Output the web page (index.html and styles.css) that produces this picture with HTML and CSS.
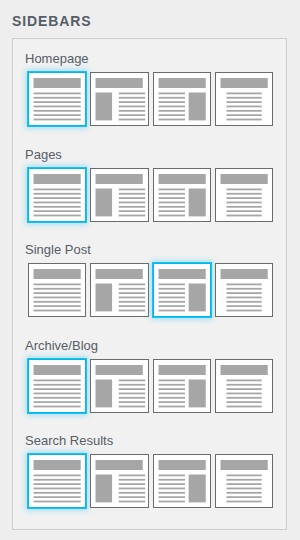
FILE: index.html
```html
<!DOCTYPE html>
<html>
<head>
<meta charset="utf-8">
<link rel="stylesheet" href="styles.css">
</head>
<body>
<svg width="0" height="0" class="defs" aria-hidden="true">
  <defs>
    <g id="lines-full">
      <rect x="4.5" y="19.5" width="47" height="1.8"/>
      <rect x="4.5" y="23.85" width="47" height="1.8"/>
      <rect x="4.5" y="28.2" width="47" height="1.8"/>
      <rect x="4.5" y="32.55" width="47" height="1.8"/>
      <rect x="4.5" y="36.9" width="47" height="1.8"/>
      <rect x="4.5" y="41.25" width="47" height="1.8"/>
      <rect x="4.5" y="45.6" width="47" height="1.8"/>
    </g>
    <g id="lay-full">
      <rect x="4.5" y="5" width="47" height="10"/>
      <use href="#lines-full"/>
    </g>
    <g id="lay-left">
      <rect x="4.5" y="5" width="47" height="10"/>
      <rect x="4.5" y="19.5" width="16.5" height="27.9"/>
      <use href="#lines-full" transform="translate(25.1 0) scale(0.56 1)"/>
    </g>
    <g id="lay-right">
      <rect x="4.5" y="5" width="47" height="10"/>
      <rect x="34.5" y="19.5" width="17" height="27.9"/>
      <use href="#lines-full" transform="translate(2 0) scale(0.56 1)"/>
    </g>
    <g id="lay-none">
      <rect x="4.5" y="5" width="47" height="10"/>
      <use href="#lines-full" transform="translate(7.1 0) scale(0.745 1)"/>
    </g>
  </defs>
</svg>

<h2 class="title">SIDEBARS</h2>
<div class="panel">
  <section class="group">
    <div class="label">Homepage</div>
    <div class="choices">
      <div class="choice selected"><svg viewBox="0 0 56 52" preserveAspectRatio="none"><use href="#lay-full"/></svg></div>
      <div class="choice"><svg viewBox="0 0 56 52" preserveAspectRatio="none"><use href="#lay-left"/></svg></div>
      <div class="choice"><svg viewBox="0 0 56 52" preserveAspectRatio="none"><use href="#lay-right"/></svg></div>
      <div class="choice"><svg viewBox="0 0 56 52" preserveAspectRatio="none"><use href="#lay-none"/></svg></div>
    </div>
  </section>
  <section class="group">
    <div class="label">Pages</div>
    <div class="choices">
      <div class="choice selected"><svg viewBox="0 0 56 52" preserveAspectRatio="none"><use href="#lay-full"/></svg></div>
      <div class="choice"><svg viewBox="0 0 56 52" preserveAspectRatio="none"><use href="#lay-left"/></svg></div>
      <div class="choice"><svg viewBox="0 0 56 52" preserveAspectRatio="none"><use href="#lay-right"/></svg></div>
      <div class="choice"><svg viewBox="0 0 56 52" preserveAspectRatio="none"><use href="#lay-none"/></svg></div>
    </div>
  </section>
  <section class="group">
    <div class="label">Single Post</div>
    <div class="choices">
      <div class="choice"><svg viewBox="0 0 56 52" preserveAspectRatio="none"><use href="#lay-full"/></svg></div>
      <div class="choice"><svg viewBox="0 0 56 52" preserveAspectRatio="none"><use href="#lay-left"/></svg></div>
      <div class="choice selected"><svg viewBox="0 0 56 52" preserveAspectRatio="none"><use href="#lay-right"/></svg></div>
      <div class="choice"><svg viewBox="0 0 56 52" preserveAspectRatio="none"><use href="#lay-none"/></svg></div>
    </div>
  </section>
  <section class="group">
    <div class="label">Archive/Blog</div>
    <div class="choices">
      <div class="choice selected"><svg viewBox="0 0 56 52" preserveAspectRatio="none"><use href="#lay-full"/></svg></div>
      <div class="choice"><svg viewBox="0 0 56 52" preserveAspectRatio="none"><use href="#lay-left"/></svg></div>
      <div class="choice"><svg viewBox="0 0 56 52" preserveAspectRatio="none"><use href="#lay-right"/></svg></div>
      <div class="choice"><svg viewBox="0 0 56 52" preserveAspectRatio="none"><use href="#lay-none"/></svg></div>
    </div>
  </section>
  <section class="group">
    <div class="label">Search Results</div>
    <div class="choices">
      <div class="choice selected"><svg viewBox="0 0 56 52" preserveAspectRatio="none"><use href="#lay-full"/></svg></div>
      <div class="choice"><svg viewBox="0 0 56 52" preserveAspectRatio="none"><use href="#lay-left"/></svg></div>
      <div class="choice"><svg viewBox="0 0 56 52" preserveAspectRatio="none"><use href="#lay-right"/></svg></div>
      <div class="choice"><svg viewBox="0 0 56 52" preserveAspectRatio="none"><use href="#lay-none"/></svg></div>
    </div>
  </section>
</div>
</body>
</html>
```
FILE: styles.css
```css
* { box-sizing: border-box; }
html, body {
  margin: 0;
  padding: 0;
  background: #eeeeee;
  font-family: "Liberation Sans", Arial, sans-serif;
  color: #555d66;
}
.defs { position: absolute; width: 0; height: 0; overflow: hidden; }
.title {
  margin: 0;
  padding: 12px 0 0 12px;
  height: 38px;
  font-size: 14px;
  line-height: 18px;
  font-weight: bold;
  letter-spacing: 0.9px;
  color: #555d66;
}
.panel {
  margin-left: 12px;
  width: 275px;
  height: 492px;
  border: 1px solid #cccccc;
  background: #f1f1f1;
  padding: 11px 13px 0 12px;
  display: flex;
  flex-direction: column;
  gap: 19.5px;
}
.label {
  font-size: 13px;
  line-height: 18px;
  margin-bottom: 4px;
  color: #555d66;
}
.choices {
  margin-left: 3px;
  display: grid;
  grid-template-columns: repeat(4, 1fr);
  gap: 4px;
}
.choice {
  height: 54px;
  border: 1px solid #6b6b6b;
  background: #ffffff;
}
.choice svg {
  display: block;
  width: 100%;
  height: 100%;
  fill: #a6a6a6;
}
.choice.selected {
  border-color: #00b9eb;
  box-shadow: 0 0 0 1px #1ebff0, 0 0 6px 2px rgba(30, 190, 240, 0.4);
}
```
